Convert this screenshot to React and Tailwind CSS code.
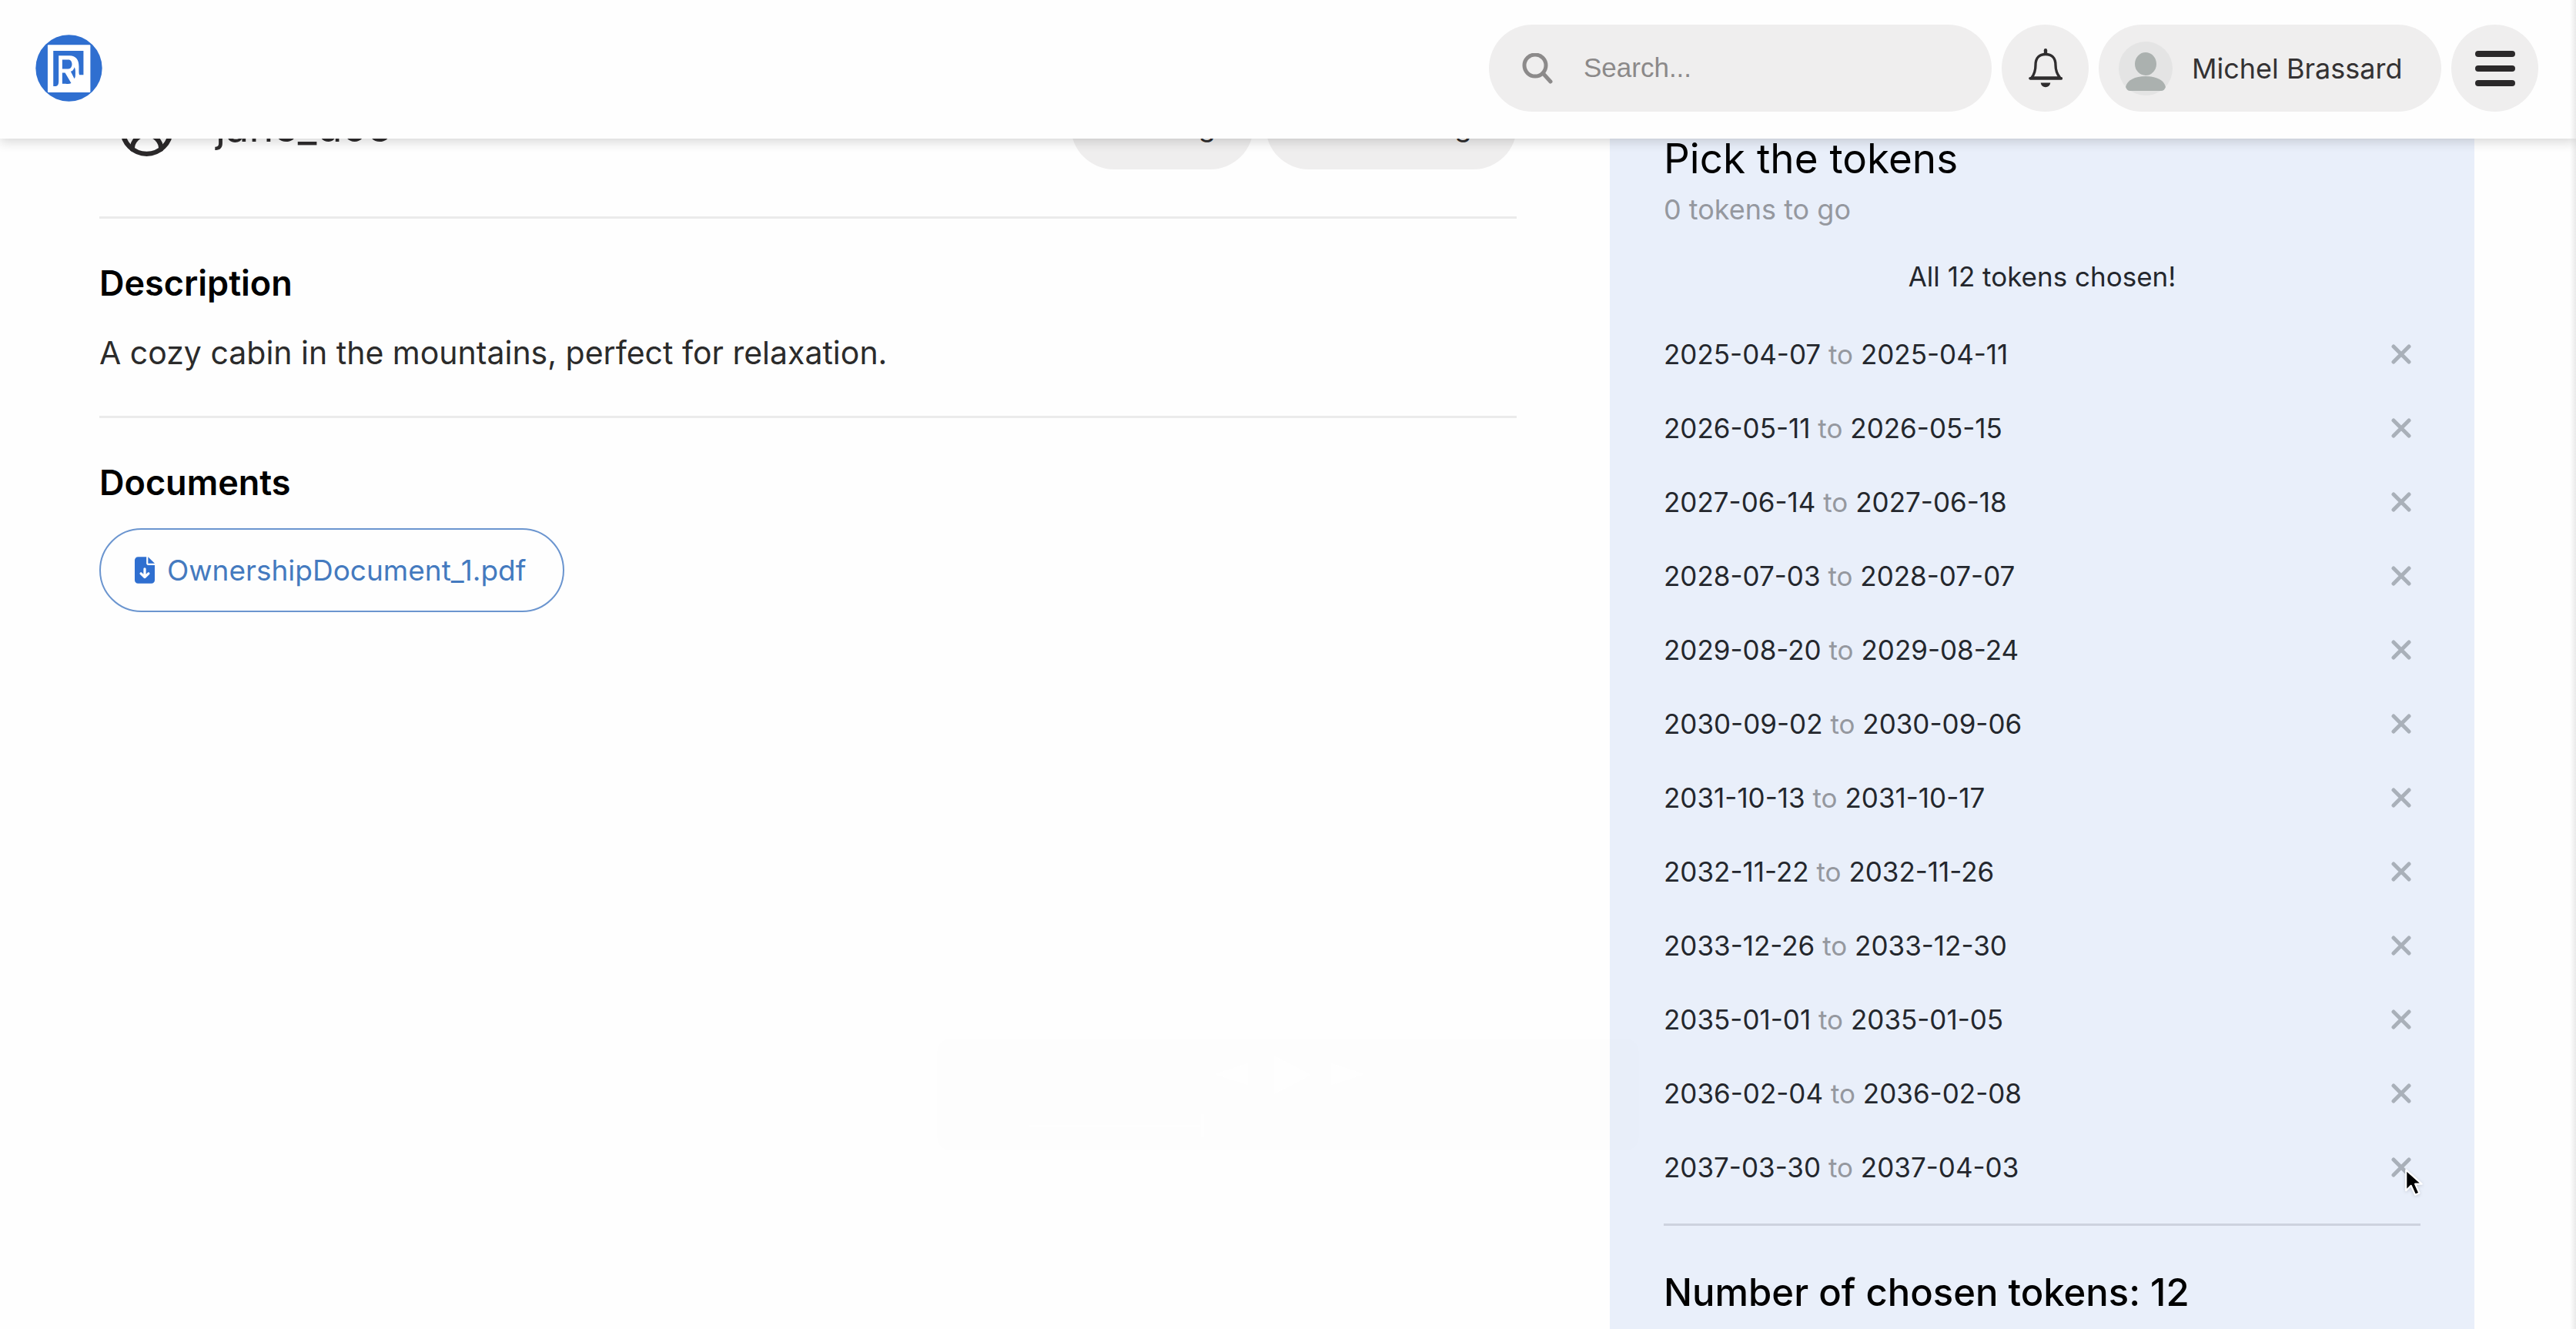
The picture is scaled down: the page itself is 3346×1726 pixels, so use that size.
import { CircleUserRound } from "lucide-react";
import { FaFileArrowDown } from "react-icons/fa6";

const tokens = [
  ["2025-04-07", "2025-04-11"],
  ["2026-05-11", "2026-05-15"],
  ["2027-06-14", "2027-06-18"],
  ["2028-07-03", "2028-07-07"],
  ["2029-08-20", "2029-08-24"],
  ["2030-09-02", "2030-09-06"],
  ["2031-10-13", "2031-10-17"],
  ["2032-11-22", "2032-11-26"],
  ["2033-12-26", "2033-12-30"],
  ["2035-01-01", "2035-01-05"],
  ["2036-02-04", "2036-02-08"],
  ["2037-03-30", "2037-04-03"],
];

function Logo() {
  return (
    <svg viewBox="18 14 262 262" className="size-[87px]" aria-hidden="true">
      <circle cx="149" cy="145" r="130" fill="#2f6fd0" />
      <rect x="66" y="54" width="167" height="186" rx="3" fill="#fff" />
      <path
        d="M88 77H206V171H190C188 168 188 162 188 152V138C188 112 176 96 152 96H109V198C109 210 104 216 98 216H88Z"
        fill="#2f6fd0"
      />
      <path
        d="M123 112H147C156 112 161 120 161 130C161 140 155 148 147 148H123Z M123 163H134L158 204C152 207 144 207 136 206H123Z M156 158C164 156 168 150 171 141C175 150 175 160 174 176C174 180 172 184 170 186Z"
        fill="#2f6fd0"
      />
    </svg>
  );
}

function SearchIcon() {
  return (
    <svg viewBox="0 0 40 40" className="size-10 shrink-0" fill="none" stroke="#8c8a8a" aria-hidden="true">
      <circle cx="17" cy="16" r="14" strokeWidth="5" />
      <path d="M27 26L37 37" strokeWidth="5" strokeLinecap="round" />
    </svg>
  );
}

function BellIcon() {
  return (
    <svg viewBox="72 40 132 152" className="h-[51px] w-11" aria-hidden="true">
      <path
        d="M84 153C97 136 99 122 99 104C99 76 114 62 138 62C162 62 177 76 177 104C177 122 180 136 194 153Z"
        fill="none"
        stroke="#2f2d2e"
        strokeWidth="10"
        strokeLinejoin="round"
      />
      <path d="M138 46V60" stroke="#2f2d2e" strokeWidth="13" strokeLinecap="round" />
      <path d="M78 156H199" stroke="#2f2d2e" strokeWidth="11" strokeLinecap="round" />
      <path d="M119 173H157C155 184 148 190 138 190C128 190 121 184 119 173Z" fill="#2f2d2e" />
    </svg>
  );
}

function Avatar() {
  return (
    <svg viewBox="0 0 70 70" className="size-[70px] shrink-0" aria-hidden="true">
      <circle cx="35" cy="35" r="35" fill="#e4e4e4" />
      <ellipse cx="35" cy="29" rx="14" ry="15" fill="#abb1af" />
      <path d="M9 59C11 50 21 45 35 45C49 45 59 50 61 59C60 62 58 64 55 64H15C12 64 10 62 9 59Z" fill="#abb1af" />
    </svg>
  );
}

function MenuIcon() {
  return (
    <svg viewBox="0 0 52 46" className="h-[46px] w-[52px]" stroke="#2b292a" strokeWidth="8" strokeLinecap="round" aria-hidden="true">
      <path d="M4 4H48M4 23H48M4 42H48" />
    </svg>
  );
}

function RemoveIcon() {
  return (
    <svg viewBox="0 0 26 26" className="size-[26px]" stroke="#a9b0b9" strokeWidth="5" strokeLinecap="round" aria-hidden="true">
      <path d="M3 3L23 23M23 3L3 23" />
    </svg>
  );
}

function Pointer() {
  return (
    <svg viewBox="0 0 26 38" className="absolute top-[12px] left-[16px] h-[41px] w-[28px] drop-shadow-sm" aria-hidden="true">
      <path
        d="M3 4V29L9 23L14 34L19 32L14 21L22 21Z"
        fill="#000"
        stroke="#fff"
        strokeWidth="2"
        strokeLinejoin="round"
      />
    </svg>
  );
}

function FadingPlayer() {
  return (
    <div
      aria-hidden="true"
      className="pointer-events-none absolute bottom-[232px] left-1/2 h-[145px] w-[912px] -translate-x-1/2 rounded-2xl bg-black/[0.004]"
    >
      <svg viewBox="0 0 912 145" className="size-full" fill="#fff" opacity="0.7">
        <path d="M404 32L360 46L404 60ZM438 22L486 47L438 72ZM512 32L556 46L512 60Z" />
        <path d="M120 112H342V115H120ZM343 98H347V128H343Z" />
      </svg>
    </div>
  );
}

function Header() {
  return (
    <header className="relative z-10 flex h-[180px] items-center justify-between bg-[#fefefe] pr-[49px] pb-[3px] pl-[46px] shadow-[0_4px_14px_rgba(0,0,0,0.16)]">
      <a href="#home" aria-label="Home">
        <Logo />
      </a>
      <div className="flex items-center gap-[13px]">
        <label className="flex h-[113px] w-[653px] items-center gap-10 rounded-full bg-[#efeeee] px-[43px]">
          <SearchIcon />
          <input
            type="search"
            aria-label="Search"
            placeholder="Search..."
            className="w-full min-w-0 bg-transparent font-['Liberation_Sans',sans-serif] text-[35px] outline-none placeholder:text-[#8b8989]"
          />
        </label>
        <button type="button" aria-label="Notifications" className="grid size-[113px] place-items-center rounded-full bg-[#efeeee]">
          <BellIcon />
        </button>
        <button type="button" className="flex h-[113px] w-[445px] items-center gap-[25px] rounded-full bg-[#efeeee] pl-[26px] text-[36px] text-[#343233]">
          <Avatar />
          Michel Brassard
        </button>
        <button type="button" aria-label="Menu" className="grid size-[113px] place-items-center rounded-full bg-[#efeeee]">
          <MenuIcon />
        </button>
      </div>
    </header>
  );
}

function Listing() {
  return (
    <div>
      <div className="flex h-28 items-center justify-between">
        <div className="flex items-center gap-[52px] pl-6">
          <CircleUserRound size={75} strokeWidth={2} color="#2b292a" className="mt-2" />
          <span className="text-[54px] text-[#2e2c2d]">jane_doe</span>
        </div>
        <div className="flex gap-4 text-[36px] text-[#2e2c2d]">
          <button type="button" className="h-28 w-[237px] rounded-full bg-[#efeeee]">Booking</button>
          <button type="button" className="h-28 w-[326px] rounded-full bg-[#efeeee]">Send message</button>
        </div>
      </div>
      <section className="mt-[61px] border-t-3 border-[#ebebeb] pt-14">
        <h2 className="text-[45px] leading-[56px] font-semibold text-black">Description</h2>
        <p className="mt-9 text-[41px] leading-[52px] text-[#2b2b2b]">
          A cozy cabin in the mountains, perfect for relaxation.
        </p>
      </section>
      <section className="mt-14 border-t-3 border-[#ebebeb] pt-14">
        <h2 className="text-[45px] leading-[56px] font-semibold text-black">Documents</h2>
        <a
          href="#document"
          className="mt-[31px] inline-flex h-[109px] items-center gap-4 rounded-full border-2 border-[#6b95cf] pr-[48px] pl-[44px] text-[37px] text-[#447abf]"
        >
          <FaFileArrowDown className="h-[35px] w-[26px] text-[#2f6fd0]" />
          OwnershipDocument_1.pdf
        </a>
      </section>
    </div>
  );
}

function TokenPicker() {
  return (
    <aside className="bg-[#e9effa] px-[70px] pt-[66px] pb-16">
      <h2 className="text-[53px] leading-[64px] text-black">Pick the tokens</h2>
      <p className="mt-3 text-[36px] leading-[44px] text-[#95989f]">0 tokens to go</p>
      <p className="mt-[43px] text-center text-[35px] leading-[44px] text-[#24272d]">All 12 tokens chosen!</p>
      <ul className="mt-[31px]">
        {tokens.map(([from, to], i) => (
          <li key={from} className="flex h-24 items-center justify-between pr-3 text-[35px] text-[#24272d]">
            <span>
              {from} <span className="text-[#95989f]">to</span> {to}
            </span>
            <button type="button" aria-label={`Remove ${from} to ${to}`} className="relative">
              <RemoveIcon />
              {i === tokens.length - 1 && <Pointer />}
            </button>
          </li>
        ))}
      </ul>
      <p className="mt-[25px] border-t-3 border-[#cdd2de] pt-[57px] text-[49px] leading-[60px] font-medium text-black">
        Number of chosen tokens: 12
      </p>
    </aside>
  );
}

export default function App() {
  return (
    <div className="relative h-screen overflow-hidden bg-[#fefefe] font-['Inter',sans-serif]">
      <Header />
      <main className="-mt-[72px] grid grid-cols-[1841fr_1123fr] gap-[121px] pr-[132px] pl-[129px]">
        <Listing />
        <TokenPicker />
      </main>
      <FadingPlayer />
      <div aria-hidden="true" className="absolute inset-y-0 right-0 z-20 w-2 bg-linear-to-r from-transparent to-black/8" />
    </div>
  );
}
